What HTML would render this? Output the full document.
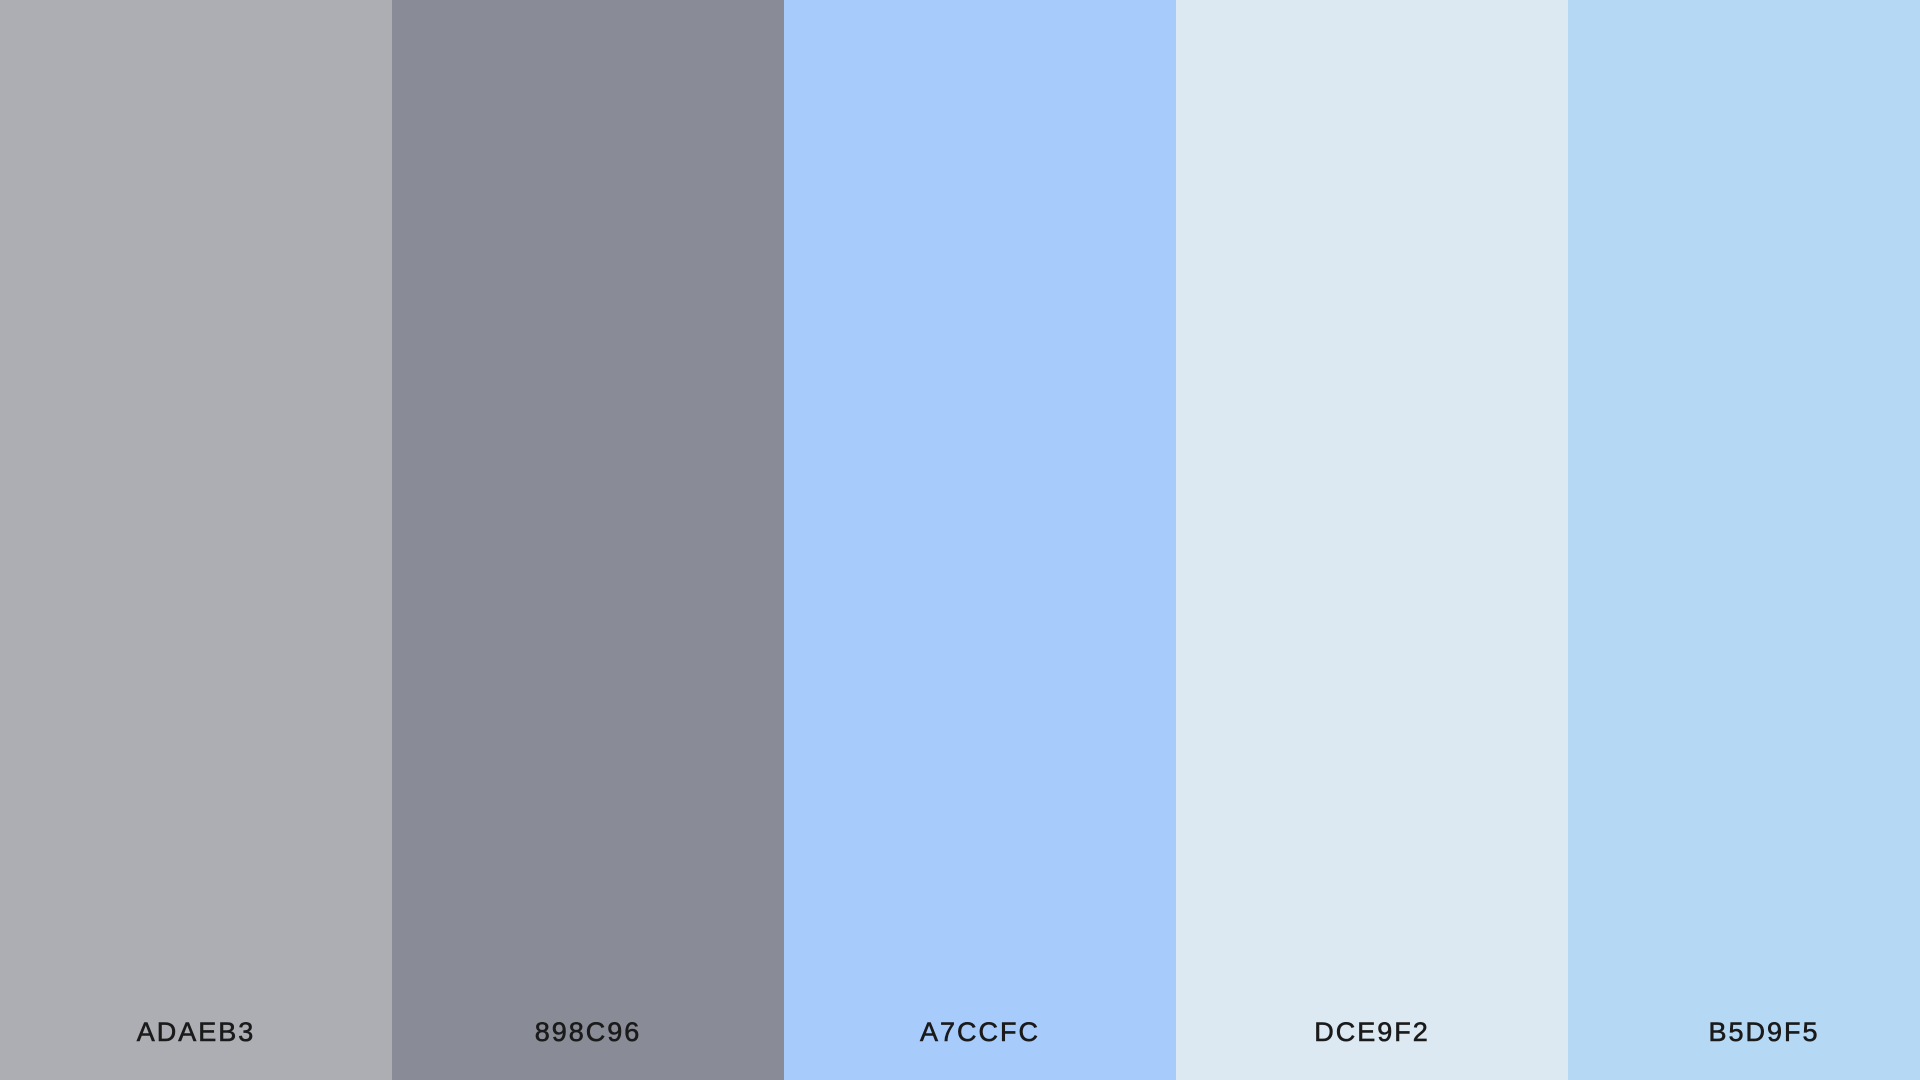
<!DOCTYPE html>
<html><head><meta charset="utf-8"><style>
html,body{margin:0;padding:0;width:1920px;height:1080px;overflow:hidden}
.w{position:relative;width:1920px;height:1080px}
.c{position:absolute;top:0;width:392px;height:1080px}
.c span{position:absolute;left:0;right:0;top:1017px;text-align:center;font-family:"Liberation Sans",sans-serif;font-size:27px;letter-spacing:2px;color:#1a1a1a;-webkit-text-stroke:0.6px #1a1a1a}
</style></head><body><div class="w">
<div class="c" style="left:0;background:#ADAEB3"><span>ADAEB3</span></div>
<div class="c" style="left:392px;background:#898C96"><span>898C96</span></div>
<div class="c" style="left:784px;background:#A7CCFC"><span>A7CCFC</span></div>
<div class="c" style="left:1176px;background:#DCE9F2"><span>DCE9F2</span></div>
<div class="c" style="left:1568px;background:#B5D9F5"><span>B5D9F5</span></div>
</div></body></html>
